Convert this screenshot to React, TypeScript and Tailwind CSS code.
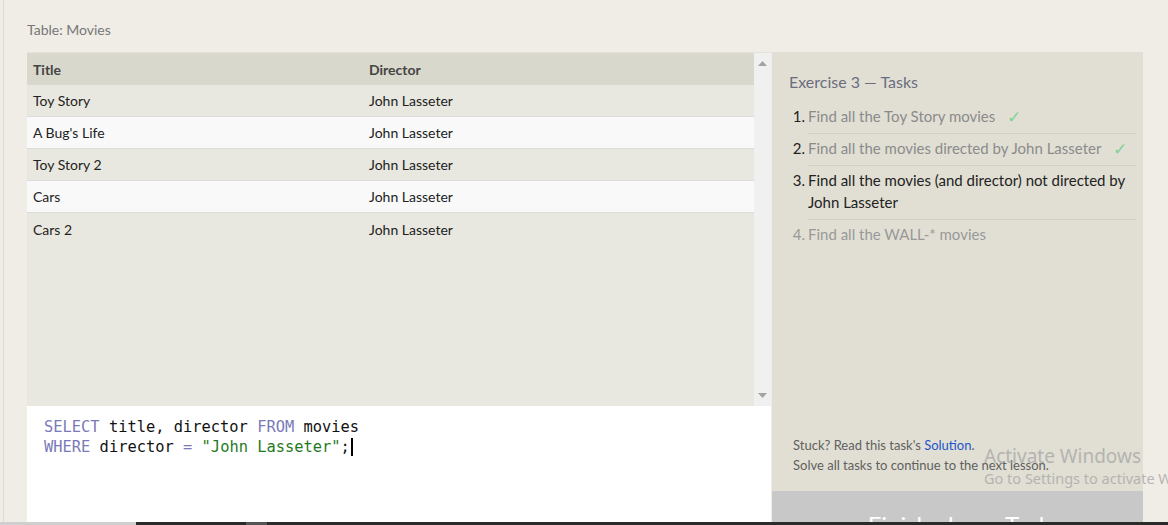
import React from "react";

const rows = [
  ["Toy Story", "John Lasseter"],
  ["A Bug's Life", "John Lasseter"],
  ["Toy Story 2", "John Lasseter"],
  ["Cars", "John Lasseter"],
  ["Cars 2", "John Lasseter"],
];

function Check() {
  return <span className="ml-[12px] align-[-1px] text-[17px] leading-none text-[#86cf95]">✓</span>;
}

export default function App() {
  return (
    <div
      className="relative h-[525px] w-[1168px] overflow-hidden bg-[#f0ede6]"
      style={{ fontFamily: "Lato, 'Open Sans', sans-serif" }}
    >
      <div className="ml-[3px] flex h-[522px] flex-col border-l border-[#dcd9d0]">
        <div className="pl-[23px] pt-[20px] text-[14px] leading-[20px] text-[#777777]">
          Table: Movies
        </div>
        <div className="mt-[12px] flex flex-1 pl-[23px] pr-[25px]">
          {/* left column */}
          <div className="flex w-[744px] flex-col">
            <div className="flex h-[354px] border-t border-[#e4e2da]">
              <div className="flex w-[727px] flex-col bg-[#e9e8e0]">
                <div className="flex h-[32px] items-center bg-[#d9d8cc] text-[14px] font-bold text-[#444444]">
                  <div className="w-[342px] pl-[6px]">Title</div>
                  <div>Director</div>
                </div>
                {rows.map((r, i) => (
                  <div
                    key={i}
                    className={`flex h-[32px] items-center text-[14px] text-[#222222] ${
                      i % 2 === 1 ? "bg-[#f9f9f9]" : "bg-[#e9e8e0]"
                    } ${i < rows.length - 1 ? "border-b border-[#dcdcdc]" : ""}`}
                  >
                    <div className="w-[342px] pl-[6px]">{r[0]}</div>
                    <div>{r[1]}</div>
                  </div>
                ))}
              </div>
              <div className="flex w-[17px] flex-col items-center justify-between bg-[#f0f0f0] py-[8px]">
                <svg width="9" height="5" viewBox="0 0 9 5">
                  <path d="M0 5 L4.5 0 L9 5 Z" fill="#a3a3a3" />
                </svg>
                <svg width="9" height="5" viewBox="0 0 9 5">
                  <path d="M0 0 L4.5 5 L9 0 Z" fill="#a3a3a3" />
                </svg>
              </div>
            </div>
            <div
              className="flex-1 bg-white pl-[17px] pt-[11px] text-[15.4px] leading-[20px] text-[#111111]"
              style={{ fontFamily: "'DejaVu Sans Mono', 'Liberation Mono', monospace" }}
            >
              <div className="whitespace-pre">
                <span className="text-[#7a7ab8]">SELECT</span> title, director{" "}
                <span className="text-[#7a7ab8]">FROM</span> movies
              </div>
              <div className="whitespace-pre">
                <span className="text-[#7a7ab8]">WHERE</span> director{" "}
                <span className="text-[#7a7ab8]">=</span>{" "}
                <span className="text-[#1f7a1f]">"John Lasseter"</span>;
                <span className="ml-[1px] inline-block h-[18px] w-[2px] align-[-4px] bg-black" />
              </div>
            </div>
          </div>
          {/* right panel */}
          <div className="ml-[1px] flex w-[371px] flex-col bg-[#e1dfd4]">
            <div className="flex-1 pl-[17px] pr-[7px]">
              <div className="pt-[19px] text-[16px] leading-[22px] text-[#6a6d7e]">
                Exercise 3 — Tasks
              </div>
              <div className="mt-[9px] text-[15px] leading-[22px]">
                <div className="flex">
                  <div className="w-[19px] pr-[3px] pt-[3px] text-right text-[#222222]">1.</div>
                  <div className="flex-1 border-b border-[#d2d0c5] pb-[6px] pt-[3px] text-[#8b8b8b]">
                    Find all the Toy Story movies
                    <Check />
                  </div>
                </div>
                <div className="flex">
                  <div className="w-[19px] pr-[3px] pt-[3px] text-right text-[#222222]">2.</div>
                  <div className="flex-1 border-b border-[#d2d0c5] pb-[6px] pt-[3px] text-[#8b8b8b]">
                    Find all the movies directed by John Lasseter
                    <Check />
                  </div>
                </div>
                <div className="flex">
                  <div className="w-[19px] pr-[3px] pt-[3px] text-right text-[#222222]">3.</div>
                  <div className="flex-1 border-b border-[#d2d0c5] pb-[6px] pt-[3px] text-[#222222]">
                    Find all the movies (and director) not directed by John Lasseter
                  </div>
                </div>
                <div className="flex text-[#999999]">
                  <div className="w-[19px] pr-[3px] pt-[3px] text-right">4.</div>
                  <div className="flex-1 pb-[6px] pt-[3px]">Find all the WALL-* movies</div>
                </div>
              </div>
            </div>
            <div className="pb-[16px] pl-[21px] text-[13px] leading-[20px] text-[#5f5f5f]">
              <div>
                Stuck? Read this task's <span className="text-[#2255cc]">Solution</span>.
              </div>
              <div>Solve all tasks to continue to the next lesson.</div>
            </div>
            <div className="flex h-[31px] justify-center overflow-hidden bg-[#c8c8c8]">
              <div className="pl-[14px] pt-[19px] text-[24px] leading-[30px] text-white">Finish above Tasks</div>
            </div>
          </div>
        </div>
      </div>
      {/* bottom bar */}
      <div className="flex h-[3px]">
        <div className="w-[136px] bg-[#cfcfcf]" />
        <div className="w-[110px] bg-[#2b2b2b]" />
        <div className="w-[21px] bg-[#555555]" />
        <div className="flex-1 bg-[#2b2b2b]" />
      </div>
      {/* Activate Windows watermark */}
      <div
        className="pointer-events-none absolute left-[984px] top-[444px] whitespace-nowrap text-[#a9a9a9] opacity-80"
        style={{ fontFamily: "'Noto Sans', 'Open Sans', sans-serif" }}
      >
        <div className="text-[19px] leading-[24px]">Activate Windows</div>
        <div className="text-[14.5px] leading-[20px]">Go to Settings to activate Windows.</div>
      </div>
    </div>
  );
}
